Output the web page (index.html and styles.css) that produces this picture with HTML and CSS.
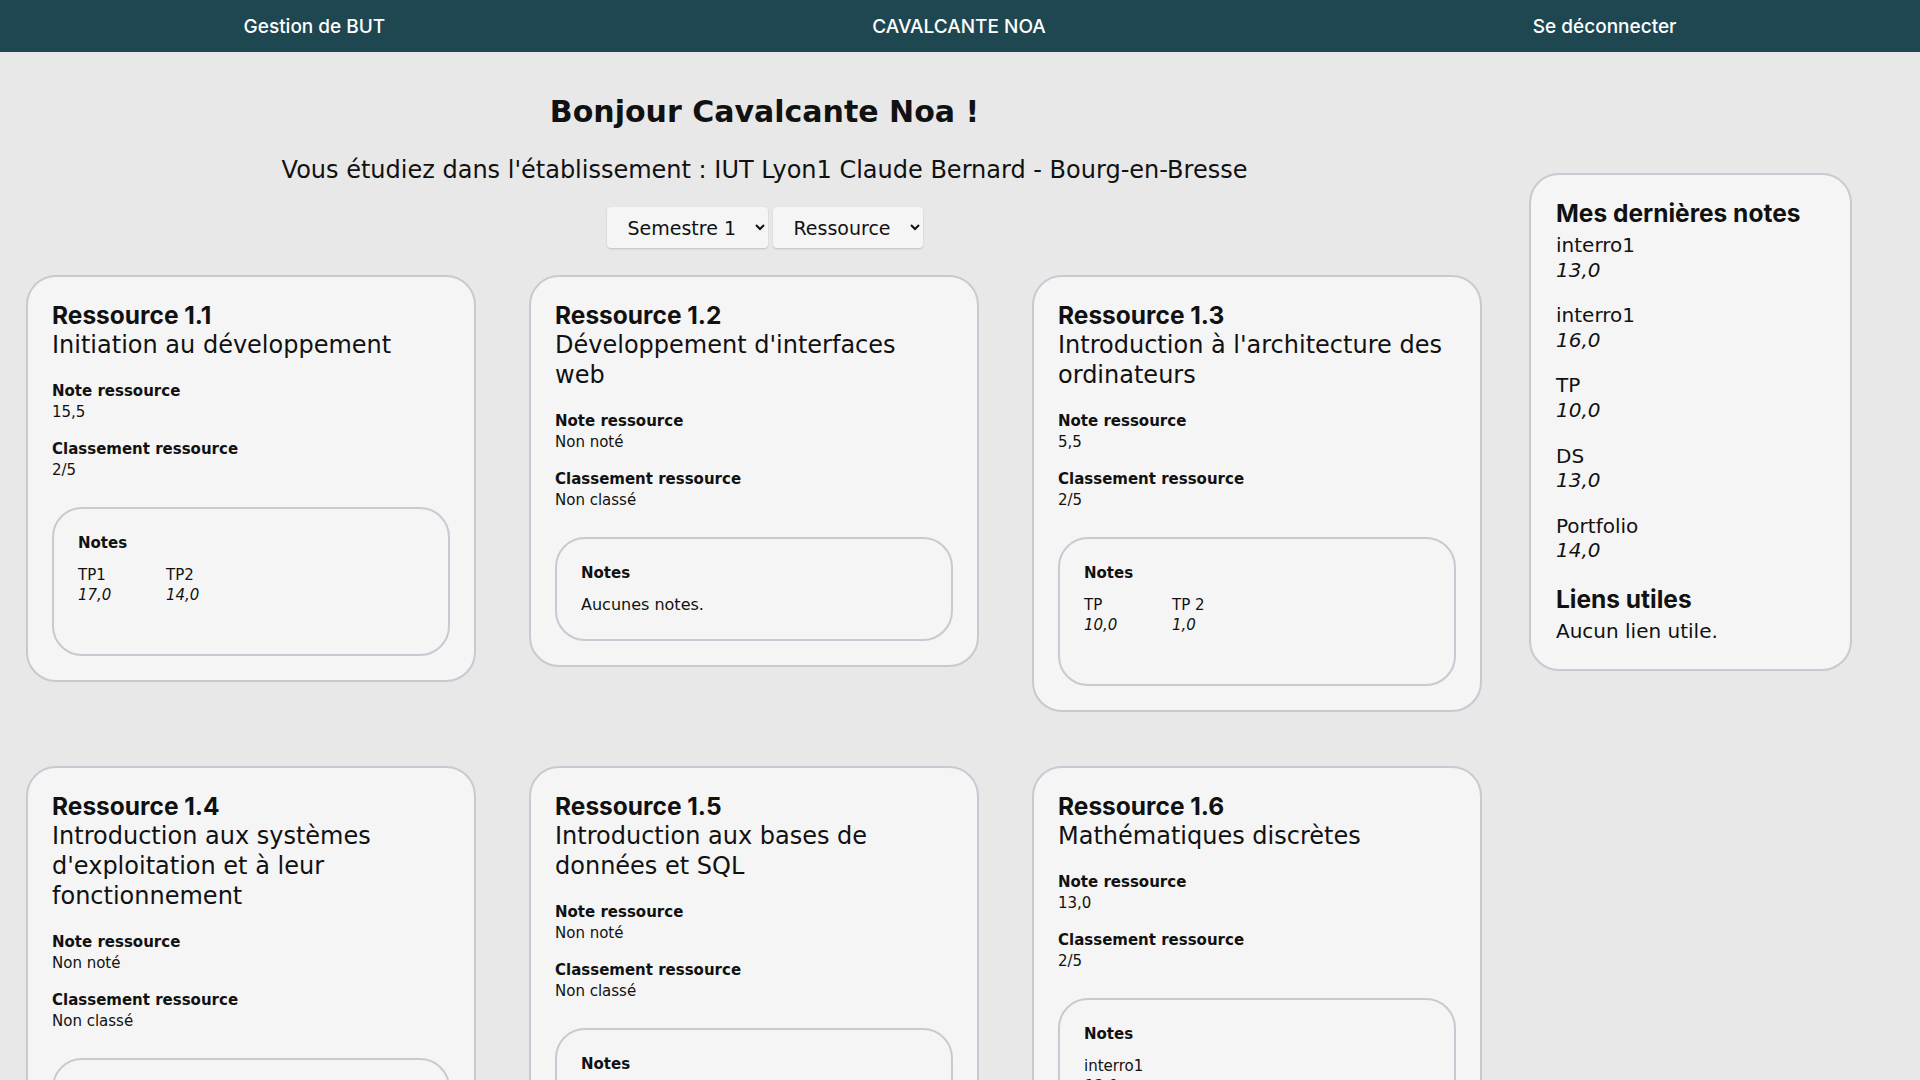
FILE: index.html
```html
<!DOCTYPE html>
<html lang="fr">
<head>
<meta charset="utf-8">
<title>Gestion de BUT</title>
<link rel="stylesheet" href="styles.css">
</head>
<body>
<nav class="topbar">
  <a class="topbar-link" href="#">Gestion de BUT</a>
  <span class="topbar-user">CAVALCANTE NOA</span>
  <a class="topbar-link" href="#">Se déconnecter</a>
</nav>
<main class="page">
  <div class="layout">
    <section class="content">
      <h1 class="greeting">Bonjour Cavalcante Noa !</h1>
      <p class="school">Vous étudiez dans l'établissement : IUT Lyon1 Claude Bernard - Bourg-en-Bresse</p>
      <div class="filters">
        <select class="filter"><option>Semestre 1</option><option>Semestre 2</option></select>
        <select class="filter"><option>Ressource</option><option>SAÉ</option></select>
      </div>
      <div class="cards">
        <article class="card">
          <h2 class="card-code">Ressource 1.1</h2>
          <p class="card-name">Initiation au développement</p>
          <h3 class="card-label">Note ressource</h3>
          <p class="card-value">15,5</p>
          <h3 class="card-label card-label-gap">Classement ressource</h3>
          <p class="card-value">2/5</p>
          <div class="notes">
            <h4 class="notes-title">Notes</h4>
            <div class="grades">
              <div class="grade"><span class="grade-name">TP1</span><span class="grade-value">17,0</span></div>
              <div class="grade"><span class="grade-name">TP2</span><span class="grade-value">14,0</span></div>
            </div>
          </div>
        </article>
        <article class="card">
          <h2 class="card-code">Ressource 1.2</h2>
          <p class="card-name">Développement d'interfaces web</p>
          <h3 class="card-label">Note ressource</h3>
          <p class="card-value">Non noté</p>
          <h3 class="card-label card-label-gap">Classement ressource</h3>
          <p class="card-value">Non classé</p>
          <div class="notes">
            <h4 class="notes-title">Notes</h4>
            <p class="notes-empty">Aucunes notes.</p>
          </div>
        </article>
        <article class="card">
          <h2 class="card-code">Ressource 1.3</h2>
          <p class="card-name">Introduction à l'architecture des ordinateurs</p>
          <h3 class="card-label">Note ressource</h3>
          <p class="card-value">5,5</p>
          <h3 class="card-label card-label-gap">Classement ressource</h3>
          <p class="card-value">2/5</p>
          <div class="notes">
            <h4 class="notes-title">Notes</h4>
            <div class="grades">
              <div class="grade"><span class="grade-name">TP</span><span class="grade-value">10,0</span></div>
              <div class="grade"><span class="grade-name">TP 2</span><span class="grade-value">1,0</span></div>
            </div>
          </div>
        </article>
        <article class="card">
          <h2 class="card-code">Ressource 1.4</h2>
          <p class="card-name">Introduction aux systèmes d'exploitation et à leur fonctionnement</p>
          <h3 class="card-label">Note ressource</h3>
          <p class="card-value">Non noté</p>
          <h3 class="card-label card-label-gap">Classement ressource</h3>
          <p class="card-value">Non classé</p>
          <div class="notes">
            <h4 class="notes-title">Notes</h4>
            <p class="notes-empty">Aucunes notes.</p>
          </div>
        </article>
        <article class="card">
          <h2 class="card-code">Ressource 1.5</h2>
          <p class="card-name">Introduction aux bases de données et SQL</p>
          <h3 class="card-label">Note ressource</h3>
          <p class="card-value">Non noté</p>
          <h3 class="card-label card-label-gap">Classement ressource</h3>
          <p class="card-value">Non classé</p>
          <div class="notes">
            <h4 class="notes-title">Notes</h4>
            <p class="notes-empty">Aucunes notes.</p>
          </div>
        </article>
        <article class="card">
          <h2 class="card-code">Ressource 1.6</h2>
          <p class="card-name">Mathématiques discrètes</p>
          <h3 class="card-label">Note ressource</h3>
          <p class="card-value">13,0</p>
          <h3 class="card-label card-label-gap">Classement ressource</h3>
          <p class="card-value">2/5</p>
          <div class="notes">
            <h4 class="notes-title">Notes</h4>
            <div class="grades">
              <div class="grade"><span class="grade-name">interro1</span><span class="grade-value">13,0</span></div>
            </div>
          </div>
        </article>
        <article class="card">
          <h2 class="card-code">Ressource 1.7</h2>
          <p class="card-name">Outils mathématiques fondamentaux</p>
          <h3 class="card-label">Note ressource</h3>
          <p class="card-value">16,0</p>
          <h3 class="card-label card-label-gap">Classement ressource</h3>
          <p class="card-value">1/5</p>
          <div class="notes">
            <h4 class="notes-title">Notes</h4>
            <div class="grades">
              <div class="grade"><span class="grade-name">interro1</span><span class="grade-value">16,0</span></div>
            </div>
          </div>
        </article>
        <article class="card">
          <h2 class="card-code">Ressource 1.8</h2>
          <p class="card-name">Gestion de projet et des organisations</p>
          <h3 class="card-label">Note ressource</h3>
          <p class="card-value">13,0</p>
          <h3 class="card-label card-label-gap">Classement ressource</h3>
          <p class="card-value">3/5</p>
          <div class="notes">
            <h4 class="notes-title">Notes</h4>
            <div class="grades">
              <div class="grade"><span class="grade-name">DS</span><span class="grade-value">13,0</span></div>
            </div>
          </div>
        </article>
        <article class="card">
          <h2 class="card-code">Ressource 1.9</h2>
          <p class="card-name">Économie durable et numérique</p>
          <h3 class="card-label">Note ressource</h3>
          <p class="card-value">Non noté</p>
          <h3 class="card-label card-label-gap">Classement ressource</h3>
          <p class="card-value">Non classé</p>
          <div class="notes">
            <h4 class="notes-title">Notes</h4>
            <p class="notes-empty">Aucunes notes.</p>
          </div>
        </article>
        <article class="card">
          <h2 class="card-code">Ressource 1.10</h2>
          <p class="card-name">Anglais technique</p>
          <h3 class="card-label">Note ressource</h3>
          <p class="card-value">Non noté</p>
          <h3 class="card-label card-label-gap">Classement ressource</h3>
          <p class="card-value">Non classé</p>
          <div class="notes">
            <h4 class="notes-title">Notes</h4>
            <p class="notes-empty">Aucunes notes.</p>
          </div>
        </article>
        <article class="card">
          <h2 class="card-code">Ressource 1.11</h2>
          <p class="card-name">Bases de la communication</p>
          <h3 class="card-label">Note ressource</h3>
          <p class="card-value">Non noté</p>
          <h3 class="card-label card-label-gap">Classement ressource</h3>
          <p class="card-value">Non classé</p>
          <div class="notes">
            <h4 class="notes-title">Notes</h4>
            <p class="notes-empty">Aucunes notes.</p>
          </div>
        </article>
        <article class="card">
          <h2 class="card-code">Ressource 1.12</h2>
          <p class="card-name">Projet professionnel et personnel</p>
          <h3 class="card-label">Note ressource</h3>
          <p class="card-value">14,0</p>
          <h3 class="card-label card-label-gap">Classement ressource</h3>
          <p class="card-value">2/5</p>
          <div class="notes">
            <h4 class="notes-title">Notes</h4>
            <div class="grades">
              <div class="grade"><span class="grade-name">Portfolio</span><span class="grade-value">14,0</span></div>
            </div>
          </div>
        </article>
      </div>
    </section>
    <aside class="sidebar">
      <div class="side-card">
        <h2 class="side-title">Mes dernières notes</h2>
        <ul class="latest">
          <li class="latest-item"><span class="latest-name">interro1</span><span class="latest-value">13,0</span></li>
          <li class="latest-item"><span class="latest-name">interro1</span><span class="latest-value">16,0</span></li>
          <li class="latest-item"><span class="latest-name">TP</span><span class="latest-value">10,0</span></li>
          <li class="latest-item"><span class="latest-name">DS</span><span class="latest-value">13,0</span></li>
          <li class="latest-item"><span class="latest-name">Portfolio</span><span class="latest-value">14,0</span></li>
        </ul>
        <h2 class="side-title">Liens utiles</h2>
        <p class="side-text">Aucun lien utile.</p>
      </div>
    </aside>
  </div>
</main>
</body>
</html>
```

FILE: styles.css
```css
html, body {
  margin: 0;
  height: 100%;
}

body {
  overflow: hidden;
  background: #e8e8e8;
  color: #111;
  font-family: "DejaVu Sans", "Inter", sans-serif;
  display: flex;
  flex-direction: column;
}

.topbar {
  flex: none;
  height: 52px;
  background: #1e4752;
  display: flex;
  justify-content: space-around;
  align-items: center;
}

.topbar-link,
.topbar-user {
  color: #ffffff;
  text-decoration: none;
  font-family: "Inter", sans-serif;
  font-size: 19px;
  font-weight: 500;
}

.page {
  flex: 1;
  overflow-y: auto;
}

.page::-webkit-scrollbar {
  width: 10px;
}

.page::-webkit-scrollbar-track {
  background: transparent;
}

.page::-webkit-scrollbar-thumb {
  background: #f5f5f5;
  border: 1px solid #c5c7d0;
  border-radius: 6px;
}

.layout {
  display: flex;
  align-items: flex-start;
  padding-bottom: 22px;
}

.content {
  flex: none;
  width: 1529px;
  display: flex;
  flex-direction: column;
  align-items: center;
}

.greeting {
  margin: 42px 0 0;
  font-size: 30px;
  line-height: 36px;
  font-weight: 700;
}

.school {
  margin: 25px 0 0;
  font-size: 24px;
  line-height: 30px;
}

.filters {
  margin-top: 22px;
  display: flex;
  gap: 5px;
}

.filter {
  height: 41px;
  padding: 0 15px 0 17px;
  border: none;
  border-radius: 4px;
  background: #f5f5f5;
  box-shadow: 0 1px 2px rgba(0, 0, 0, 0.18);
  font-family: inherit;
  font-size: 19px;
  color: #111;
}

.cards {
  align-self: stretch;
  margin: 27px 0 0 26px;
  display: grid;
  grid-template-columns: repeat(3, 450px);
  column-gap: 53px;
  row-gap: 54px;
  align-items: start;
}

.card {
  background: #f5f5f5;
  border: 2px solid #c8c9d2;
  border-radius: 30px;
  padding: 23px 32px 24px 24px;
}

.card-code {
  margin: 0;
  font-family: "Inter", sans-serif;
  font-size: 24.5px;
  line-height: 30px;
  font-weight: 700;
}

.card-name {
  margin: 0;
  font-size: 24px;
  line-height: 30px;
  font-weight: 400;
}

.card-label {
  margin: 21px 0 0;
  font-size: 15px;
  line-height: 21px;
  font-weight: 700;
}

.card-label-gap {
  margin-top: 16px;
}

.card-value {
  margin: 0;
  font-size: 15px;
  line-height: 21px;
}

.notes {
  margin-top: 26px;
  margin-right: -8px;
  border: 2px solid #c8c9d2;
  border-radius: 30px;
  padding: 24px 24px 24px;
}

.notes-title {
  margin: 0;
  font-size: 15px;
  line-height: 21px;
  font-weight: 700;
}

.notes-empty {
  margin: 11px 0 0;
  font-size: 16px;
  line-height: 20px;
}

.grades {
  margin-top: 11px;
  display: flex;
  flex-wrap: wrap;
}

.grade {
  width: 88px;
  display: flex;
  flex-direction: column;
  margin-bottom: 25px;
  font-size: 15px;
  line-height: 20px;
}

.grade-value {
  font-style: italic;
}

.sidebar {
  flex: none;
  width: 323px;
  margin-top: 121px;
}

.side-card {
  background: #f5f5f5;
  border: 2px solid #c8c9d2;
  border-radius: 30px;
  padding: 23px 25px 25px;
}

.side-title {
  margin: 0;
  font-family: "Inter", sans-serif;
  font-size: 24.5px;
  line-height: 30px;
  font-weight: 700;
}

.latest {
  list-style: none;
  margin: 5px 0 0;
  padding: 0;
}

.latest-item {
  display: flex;
  flex-direction: column;
  margin-bottom: 21px;
  font-size: 20px;
  line-height: 24.6px;
}

.latest-value {
  font-style: italic;
}

.side-text {
  margin: 5px 0 0;
  font-size: 20px;
  line-height: 25px;
}
```
